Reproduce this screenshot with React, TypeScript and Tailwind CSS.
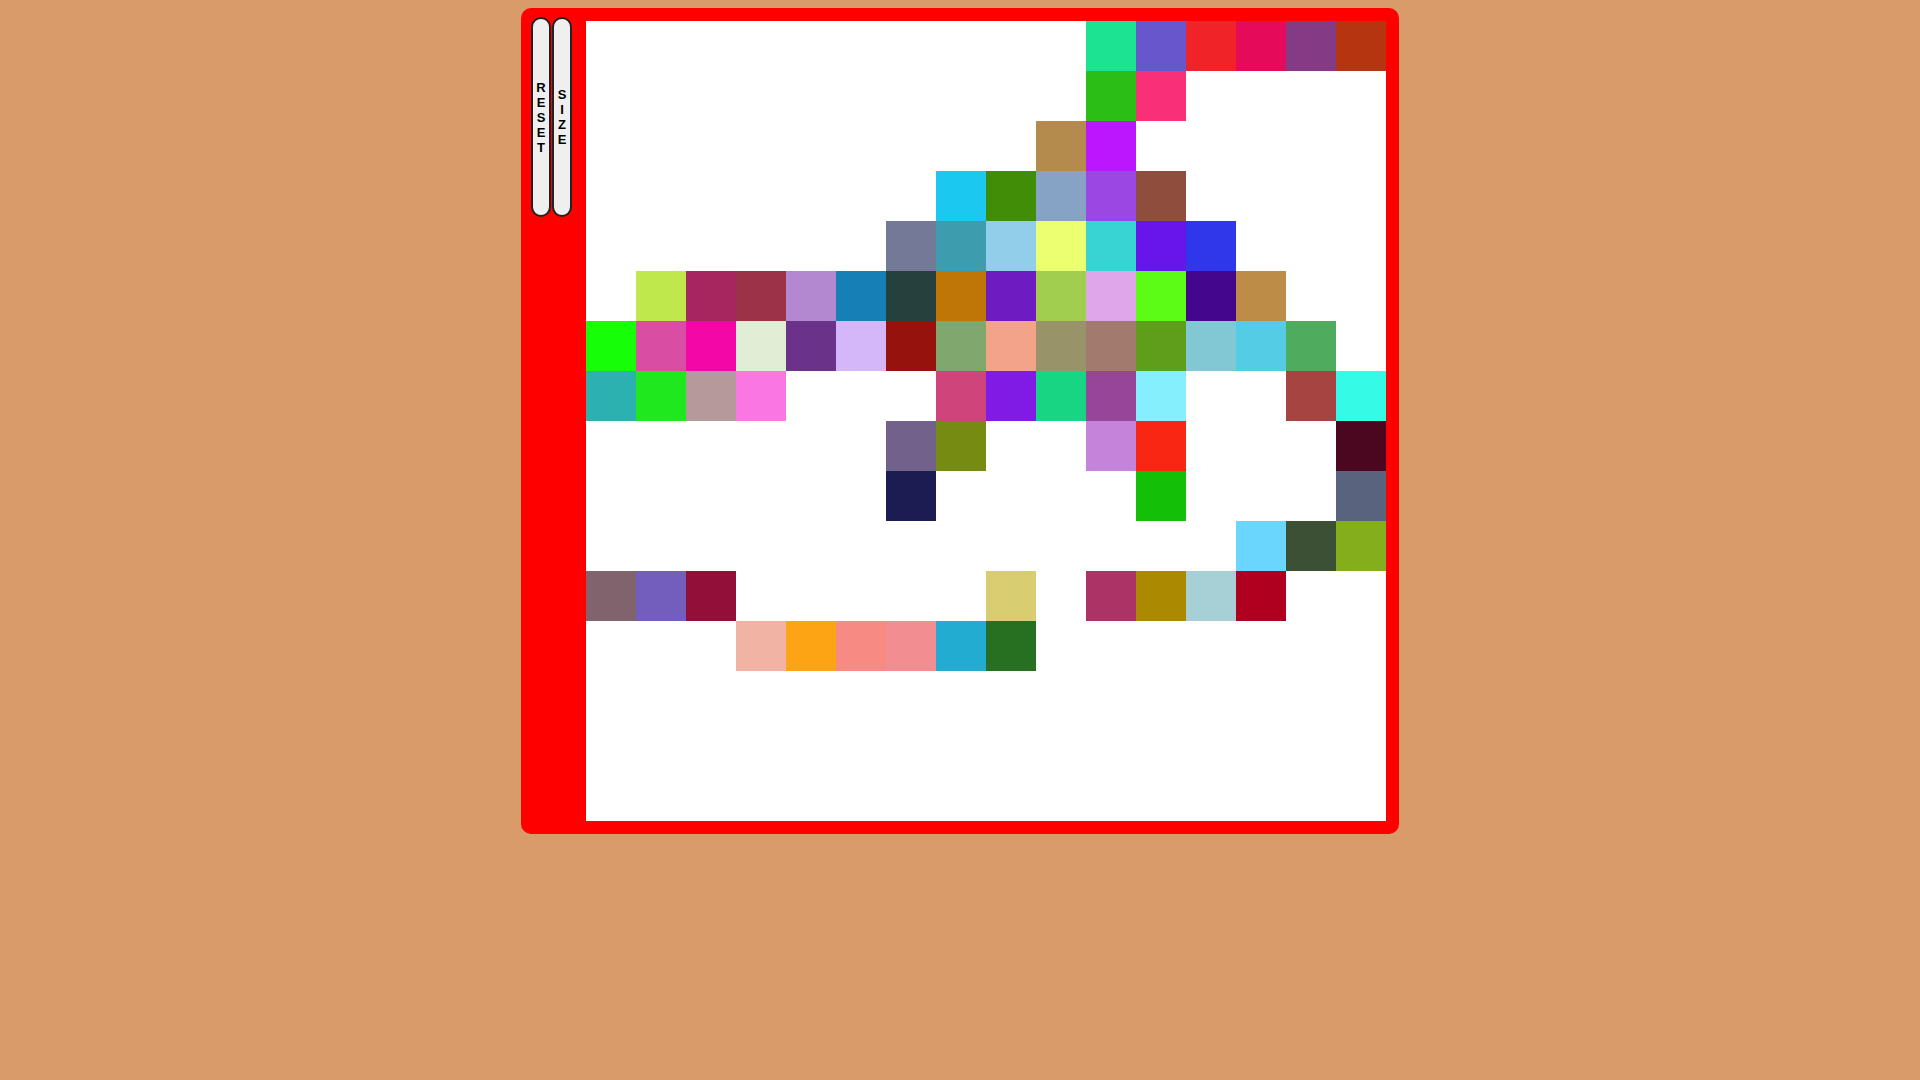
import React from "react";

// sparse map of painted cells: [row, col, colour]
const PAINTED: [number, number, string][] = [
  [0, 10, "#1be392"], [0, 11, "#6756cc"], [0, 12, "#f02329"], [0, 13, "#e60a5a"], [0, 14, "#843a84"], [0, 15, "#b43510"],
  [1, 10, "#2bbe16"], [1, 11, "#f93077"],
  [2, 9, "#b48b4d"], [2, 10, "#bc16ff"],
  [3, 7, "#1bc9f0"], [3, 8, "#428d07"], [3, 9, "#86a3c6"], [3, 10, "#9a47e3"], [3, 11, "#8f4e3d"],
  [4, 6, "#737996"], [4, 7, "#3d9cad"], [4, 8, "#92cdea"], [4, 9, "#ebff70"], [4, 10, "#38d4d4"], [4, 11, "#6815ec"], [4, 12, "#3036ea"],
  [5, 1, "#bee84c"], [5, 2, "#a8265f"], [5, 3, "#9b3248"], [5, 4, "#b388d1"], [5, 5, "#167fb5"], [5, 6, "#26403d"], [5, 7, "#bf7607"],
  [5, 8, "#6e1bc1"], [5, 9, "#a2ce50"], [5, 10, "#dfa7ea"], [5, 11, "#5cfc16"], [5, 12, "#43068c"], [5, 13, "#bd8d48"],
  [6, 0, "#17ff08"], [6, 1, "#d94ea2"], [6, 2, "#f307a7"], [6, 3, "#e1edd4"], [6, 4, "#6a3289"], [6, 5, "#d4b7f8"], [6, 6, "#96120d"], [6, 7, "#7fa76e"],
  [6, 8, "#f2a38a"], [6, 9, "#989368"], [6, 10, "#a27b6e"], [6, 11, "#5e9e1b"], [6, 12, "#82c7d4"], [6, 13, "#55cce5"], [6, 14, "#4fab5d"],
  [7, 0, "#2cb1b0"], [7, 1, "#20e81e"], [7, 2, "#b69a9b"], [7, 3, "#fa76e3"], [7, 7, "#cf457b"],
  [7, 8, "#801be6"], [7, 9, "#17d583"], [7, 10, "#964599"], [7, 11, "#86effe"], [7, 14, "#a54440"], [7, 15, "#35fae5"],
  [8, 6, "#72618b"], [8, 7, "#768b12"], [8, 10, "#c583da"], [8, 11, "#f82613"], [8, 15, "#4b0720"],
  [9, 6, "#1c1c52"], [9, 11, "#14bf07"], [9, 15, "#59637e"],
  [10, 13, "#6ad6fe"], [10, 14, "#3c5036"], [10, 15, "#85ae1c"],
  [11, 0, "#80636d"], [11, 1, "#735ebe"], [11, 2, "#910f38"], [11, 8, "#d8cd71"], [11, 10, "#ab3366"], [11, 11, "#ab8a02"], [11, 12, "#a6cfd6"], [11, 13, "#b0001f"],
  [12, 3, "#f1b3a3"], [12, 4, "#fca413"], [12, 5, "#f78b84"], [12, 6, "#f28e91"], [12, 7, "#23acd1"], [12, 8, "#277021"],
];

const SIZE = 16;

function buildGrid(): (string | null)[] {
  const cells: (string | null)[] = Array(SIZE * SIZE).fill(null);
  for (const [r, c, color] of PAINTED) cells[r * SIZE + c] = color;
  return cells;
}

function SideButton({ label }: { label: string }) {
  return (
    <button className="flex h-[200px] w-[20px] flex-col items-center justify-center rounded-full border-2 border-[#222] bg-[#efefef] text-[13px] leading-[15px] font-bold text-black">
      {label.split("").map((ch, i) => (
        <span key={i}>{ch}</span>
      ))}
    </button>
  );
}

export default function App() {
  const cells = buildGrid();

  return (
    <div className="min-h-screen bg-[#da9b6a] pt-2 font-['Liberation_Sans',Arial,sans-serif]">
      <div className="mx-auto flex w-[878px] rounded-[10px] bg-[#ff0000] pt-[9px] pr-[13px] pb-[13px] pl-[10px]">
        <div className="flex gap-px self-start">
          <SideButton label="RESET" />
          <SideButton label="SIZE" />
        </div>
        <div className="mt-[4px] ml-[14px] grid h-[800px] w-[800px] grid-cols-[repeat(16,50px)] bg-white">
          {cells.map((color, i) => (
            <div
              key={i}
              className="h-[50px] w-[50px]"
              style={color ? { backgroundColor: color } : undefined}
            />
          ))}
        </div>
      </div>
    </div>
  );
}
